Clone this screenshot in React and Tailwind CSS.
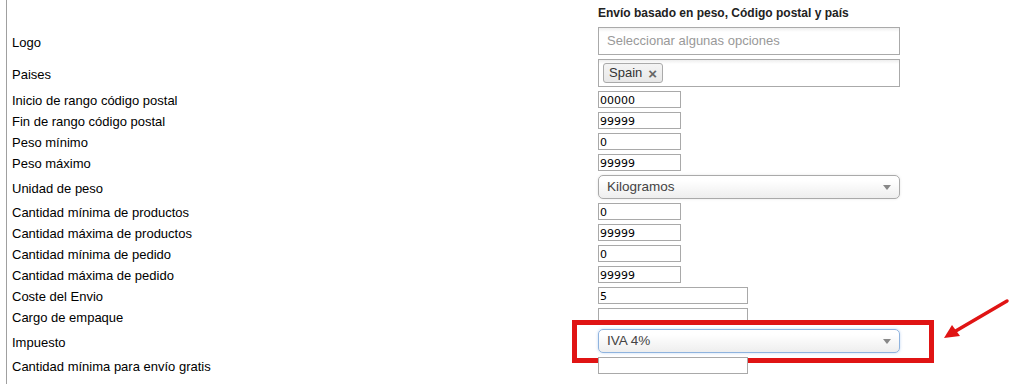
import React from 'react';

const labelFont = { fontFamily: '"Liberation Sans", Arial, sans-serif' };

function TextInput({ value = '', wide = false }) {
    return (
        <div
            className={`h-[17px] ${wide ? 'w-[150px]' : 'w-[83px]'} border border-[#a9a9a9] bg-white flex items-center pl-[1px] pt-[1px] text-[11px] text-black leading-none font-['DejaVu_Sans',sans-serif]`}
        >
            {value}
        </div>
    );
}

function ChosenSelect({ value, focused = false }) {
    return (
        <div
            className={`h-[24px] w-[302px] rounded-[5px] border ${focused ? 'border-[#8fb3de] shadow-[0_0_3px_rgba(80,140,220,0.35)]' : 'border-[#aaa] shadow-[0_0_3px_rgba(0,0,0,0.1)]'} bg-gradient-to-b from-white from-20% to-[#eeeeee] flex items-center justify-between pl-[8px] pr-[8px] text-[13.5px] text-[#444]`}
            style={labelFont}
        >
            <span>{value}</span>
            <span className="w-0 h-0 border-l-[4px] border-r-[4px] border-t-[5px] border-l-transparent border-r-transparent border-t-[#888]" />
        </div>
    );
}

function MultiBox({ children }) {
    return (
        <div className="h-[28px] w-[302px] border border-[#aaa] bg-gradient-to-b from-[#eeeeee] from-0% to-white to-15% flex items-center px-[4px]" style={labelFont}>
            {children}
        </div>
    );
}

const rows = [
    { label: 'Logo', control: <MultiBox><span className="text-[13px] text-[#999] pl-[4px]">Seleccionar algunas opciones</span></MultiBox> },
    {
        label: 'Paises',
        control: (
            <MultiBox>
                <span className="h-[20px] rounded-[3px] border border-[#aaa] bg-gradient-to-b from-[#f4f4f4] to-[#e8e8e8] flex items-center pl-[5px] pr-[5px] gap-[6px] text-[13px] text-[#333]">
                    Spain
                    <span className="text-[15px] font-bold text-[#666] leading-none">×</span>
                </span>
            </MultiBox>
        ),
    },
    { label: 'Inicio de rango código postal', control: <TextInput value="00000" /> },
    { label: 'Fin de rango código postal', control: <TextInput value="99999" /> },
    { label: 'Peso mínimo', control: <TextInput value="0" /> },
    { label: 'Peso máximo', control: <TextInput value="99999" /> },
    { label: 'Unidad de peso', control: <ChosenSelect value="Kilogramos" /> },
    { label: 'Cantidad mínima de productos', control: <TextInput value="0" /> },
    { label: 'Cantidad máxima de productos', control: <TextInput value="99999" /> },
    { label: 'Cantidad mínima de pedido', control: <TextInput value="0" /> },
    { label: 'Cantidad máxima de pedido', control: <TextInput value="99999" /> },
    { label: 'Coste del Envio', control: <TextInput value="5" wide /> },
    { label: 'Cargo de empaque', control: <TextInput wide /> },
    { label: 'Impuesto', control: <ChosenSelect value="IVA 4%" focused />, highlight: true },
    { label: 'Cantidad mínima para envío gratis', control: <TextInput wide /> },
];

export default function App() {
    return (
        <div className="w-[1012px] h-[384px] bg-white overflow-hidden relative" style={labelFont}>
            <div className="ml-[6px] border-l border-[#a0a0a0] h-full">
                <div className="grid grid-cols-[591px_1fr] gap-y-[4px] items-center">
                    {/* Header */}
                    <div className="h-[23px]" />
                    <div className="h-[23px] flex items-end pb-[1px] text-[12px] font-bold text-[#222]">
                        Envío basado en peso, Código postal y país
                    </div>

                    {rows.map((row) => (
                        <React.Fragment key={row.label}>
                            <div className="pl-[5px] pt-[2px] text-[13px] text-black leading-none">{row.label}</div>
                            <div className="relative">
                                {row.control}
                                {row.highlight && (
                                    <div className="absolute left-[-26px] top-[-9px] w-[362px] h-[43px] border-[5px] border-[#e01414] pointer-events-none" />
                                )}
                            </div>
                        </React.Fragment>
                    ))}
                </div>
            </div>

            {/* Red arrow */}
            <svg className="absolute left-[940px] top-[296px]" width="72" height="48" viewBox="0 0 72 48">
                <line x1="67" y1="5" x2="14" y2="36" stroke="#e01414" strokeWidth="3.5" strokeLinecap="round" />
                <polygon points="4,42 12,29 20,40" fill="#e01414" />
            </svg>
        </div>
    );
}
